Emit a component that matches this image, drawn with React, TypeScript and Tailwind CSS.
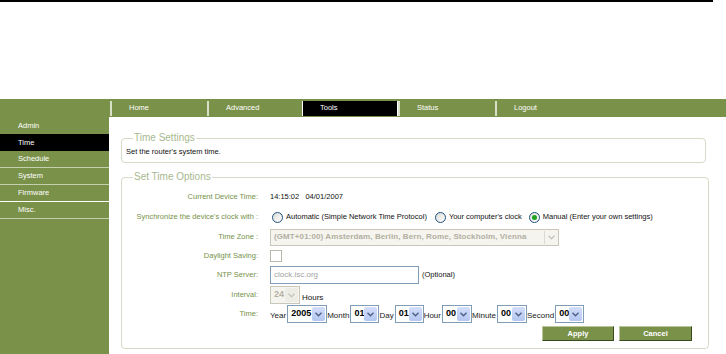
import { ReactNode } from 'react';

const tabs = [
  { label: 'Home', w: 'w-[97px]' },
  { label: 'Advanced', w: 'w-[95px]' },
  { label: 'Tools', w: 'w-[96px]', active: true },
  { label: 'Status', w: 'w-[97px]' },
  { label: 'Logout', w: 'w-[97px]' },
];

const sideItems = [
  { label: 'Admin', cls: 'h-[17px]' },
  { label: 'Time', cls: 'h-[17px] bg-black pl-[15px]', active: true },
  { label: 'Schedule', cls: 'h-[17px] border-b border-[#c5d0ae]' },
  { label: 'System', cls: 'h-[17px] border-b border-[#c5d0ae]' },
  { label: 'Firmware', cls: 'h-[17px] border-b border-white' },
  { label: 'Misc.', cls: 'h-[17px] border-b border-[#c5d0ae]' },
];

const Chevron = ({ color }: { color: string }) => (
  <svg width="7" height="5" viewBox="0 0 7 5">
    <path d="M0.5 0.8 L3.5 3.8 L6.5 0.8" fill="none" stroke={color} strokeWidth="1.4" />
  </svg>
);

const Select = ({ value, className, disabled }: { value: string; className: string; disabled?: boolean }) => (
  <div
    className={`flex h-[18px] items-center border ${
      disabled ? 'border-[#c9c7ba] bg-[#f5f4ee]' : 'border-[#7f9db9] bg-white'
    } ${className}`}
  >
    <span className={`flex-1 pl-[3px] text-[9px] font-bold ${disabled ? 'text-[#b5b2a4]' : 'text-black'}`}>
      {value}
    </span>
    <span
      className={`mr-[1px] flex h-[14px] w-[13px] items-center justify-center rounded-[2px] ${
        disabled ? 'bg-[#eeede5]' : 'bg-gradient-to-b from-[#d4def9] to-[#b4c6f1]'
      }`}
    >
      <Chevron color={disabled ? '#c9c7ba' : '#4d6185'} />
    </span>
  </div>
);

const Radio = ({ checked }: { checked?: boolean }) => (
  <span className="flex h-[11px] w-[11px] items-center justify-center rounded-full border border-[#1c5180] bg-gradient-to-br from-[#dcdcd6] to-white">
    {checked && <span className="h-[5px] w-[5px] rounded-full bg-[#21a121]" />}
  </span>
);

const Row = ({ label, h, children }: { label: string; h: string; children: ReactNode }) => (
  <>
    <div className={`flex ${h} items-center justify-end text-[#76924a]`}>{label}</div>
    <div className={`flex ${h} items-center`}>{children}</div>
  </>
);

const TimeUnit = ({ label }: { label: string }) => (
  <span className="self-end pb-[1px] text-[8px] text-[#222]">{label}</span>
);

const App = () => {
  return (
    <div className="h-[354px] w-[726px] overflow-hidden bg-white font-['Liberation_Sans',Arial,sans-serif] text-[7.5px]">
      <div className="h-[2px] w-[713px] bg-black" />
      <div className="h-[97px]" />
      <div className="flex h-[255px]">
        <aside className="flex w-[109px] flex-col bg-[#7a914a] text-white">
          <div className="h-[18px]" />
          {sideItems.map(item => (
            <div key={item.label} className={`flex items-center pl-[18px] ${item.cls}`}>
              {item.label}
            </div>
          ))}
        </aside>

        <div className="flex flex-1 flex-col">
          <nav className="flex h-[18px] items-center bg-[#7a914a] pl-[1px] text-white">
            {tabs.map(t => (
              <div
                key={t.label}
                className={`flex h-[15px] items-center pl-[17px] ${t.w} ${
                  t.active ? 'border-x border-white bg-black' : 'border-l-2 border-[#d9e0c8]'
                }`}
              >
                {t.label}
              </div>
            ))}
          </nav>

          <div className="flex flex-col pl-[12px]">
            <fieldset className="mt-[15px] w-[585px] rounded-[4px] border border-[#d6dac6] px-[4px] pb-[4px] pt-[2px]">
              <legend className="ml-[7px] px-[1px] text-[10px] leading-[12px] text-[#a8b88e]">Time Settings</legend>
              <div className="flex h-[12px] items-center text-[#111]">Set the router's system time.</div>
            </fieldset>

            <fieldset className="mt-[8px] w-[588px] rounded-[4px] border border-[#d6dac6] pb-[7px] pt-[4px]">
              <legend className="ml-[11px] px-[1px] text-[10px] leading-[12px] text-[#a8b88e]">Set Time Options</legend>
              <div className="grid grid-cols-[136px_1fr] gap-x-[12px]">
                <Row label="Current Device Time:" h="h-[20px]">
                  <span className="text-[#111]">14:15:02&nbsp;&nbsp;&nbsp;04/01/2007</span>
                </Row>
                <Row label="Synchronize the device's clock with :" h="h-[20px]">
                  <div className="flex items-center gap-[3px] pl-[2px] text-[#111]">
                    <Radio />
                    <span>Automatic (Simple Network Time Protocol)</span>
                    <span className="ml-[2px]" />
                    <Radio />
                    <span>Your computer's clock</span>
                    <span className="ml-[1px]" />
                    <Radio checked />
                    <span>Manual (Enter your own settings)</span>
                  </div>
                </Row>
                <Row label="Time Zone :" h="h-[20px]">
                  <div className="flex h-[17px] w-[289px] items-center border border-[#c9c7ba] bg-[#f5f4ee]">
                    <span className="flex-1 pl-[3px] text-[8px] font-bold tracking-[0.1px] text-[#b3b0a2]">
                      (GMT+01:00) Amsterdam, Berlin, Bern, Rome, Stockholm, Vienna
                    </span>
                    <span className="mr-[1px] flex h-[13px] w-[13px] items-center justify-center border-l border-[#dcdad0]">
                      <Chevron color="#c9c7ba" />
                    </span>
                  </div>
                </Row>
                <Row label="Daylight Saving:" h="h-[18px]">
                  <span className="h-[12px] w-[12px] border border-[#b9b8ac] bg-white" />
                </Row>
                <Row label="NTP Server:" h="h-[20px]">
                  <div className="flex h-[18px] w-[149px] items-center border border-[#7f9db9] pl-[3px] text-[8px] text-[#a3a3a3]">
                    clock.isc.org
                  </div>
                  <span className="ml-[3px] text-[#111]">(Optional)</span>
                </Row>
                <Row label="Interval:" h="h-[20px]">
                  <Select value="24" className="w-[30px]" disabled />
                  <span className="ml-[2px] self-end pb-[1px] text-[8px] text-[#111]">Hours</span>
                </Row>
                <Row label="Time:" h="h-[18px]">
                  <div className="flex h-[18px] items-center">
                    <TimeUnit label="Year" />
                    <Select value="2005" className="ml-[1px] w-[40px]" />
                    <TimeUnit label="Month" />
                    <Select value="01" className="ml-[1px] w-[29px]" />
                    <TimeUnit label="Day" />
                    <Select value="01" className="ml-[1px] w-[29px]" />
                    <TimeUnit label="Hour" />
                    <Select value="00" className="ml-[1px] w-[30px]" />
                    <TimeUnit label="Minute" />
                    <Select value="00" className="ml-[1px] w-[30px]" />
                    <TimeUnit label="Second" />
                    <Select value="00" className="ml-[1px] w-[29px]" />
                  </div>
                </Row>
              </div>
              <div className="mt-[3px] flex justify-end gap-[5px] pr-[16px]">
                <button className="h-[15px] w-[72px] border border-b-[#3b4a1e] border-l-[#b9c79a] border-r-[#3b4a1e] border-t-[#b9c79a] bg-[#7a914a] text-[7.5px] font-bold text-white">
                  Apply
                </button>
                <button className="h-[15px] w-[73px] border border-b-[#3b4a1e] border-l-[#b9c79a] border-r-[#3b4a1e] border-t-[#b9c79a] bg-[#7a914a] text-[7.5px] font-bold text-white">
                  Cancel
                </button>
              </div>
            </fieldset>
          </div>
        </div>
      </div>
    </div>
  );
};

export default App;
